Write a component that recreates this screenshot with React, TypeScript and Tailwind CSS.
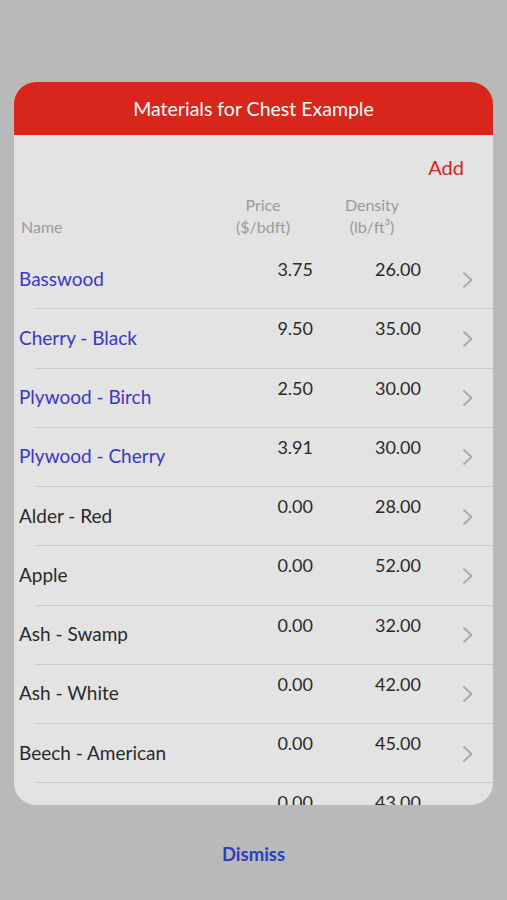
import React from "react";

const rows: { name: string; price: string; density: string; blue?: boolean }[] = [
  { name: "Basswood", price: "3.75", density: "26.00", blue: true },
  { name: "Cherry - Black", price: "9.50", density: "35.00", blue: true },
  { name: "Plywood - Birch", price: "2.50", density: "30.00", blue: true },
  { name: "Plywood - Cherry", price: "3.91", density: "30.00", blue: true },
  { name: "Alder - Red", price: "0.00", density: "28.00" },
  { name: "Apple", price: "0.00", density: "52.00" },
  { name: "Ash -  Swamp", price: "0.00", density: "32.00" },
  { name: "Ash - White", price: "0.00", density: "42.00" },
  { name: "Beech - American", price: "0.00", density: "45.00" },
  { name: "Birch - Yellow", price: "0.00", density: "43.00" },
];

function Chevron() {
  return (
    <svg width="12" height="18" viewBox="0 0 12 18" fill="none">
      <path d="M2 2 L9.5 9 L2 16" stroke="#a8a8a8" strokeWidth="1.8" strokeLinecap="round" strokeLinejoin="round" />
    </svg>
  );
}

export default function App() {
  return (
    <div
      className="w-[507px] h-[900px] bg-[#b9b9b9] flex flex-col items-center pt-[82px]"
      style={{ fontFamily: "Lato, 'Open Sans', sans-serif" }}
    >
      <div className="w-[479px] h-[723px] rounded-[22px] overflow-hidden bg-[#e3e3e3] flex flex-col">
        <div className="h-[53px] bg-[#d9261c] flex items-center justify-center text-white text-[19.5px] shrink-0">
          Materials for Chest Example
        </div>
        <div className="h-[115px] shrink-0 flex flex-col">
          <div className="flex justify-end pr-[29px] pt-[18px] text-[#d9261c] text-[20px] leading-[28px]">Add</div>
          <div className="flex items-end pl-[7px] mt-[13px] text-[#9a9a9a] text-[16px] leading-[22px]">
            <div className="w-[196px]">Name</div>
            <div className="w-[92px] text-center flex flex-col">
              <span>Price</span>
              <span>($/bdft)</span>
            </div>
            <div className="w-[17px]" />
            <div className="w-[92px] text-center flex flex-col">
              <span>Density</span>
              <span>(lb/ft³)</span>
            </div>
          </div>
        </div>
        <div className="flex-1 overflow-hidden flex flex-col">
          {rows.map((r) => (
            <div key={r.name} className="h-[59.25px] shrink-0 flex flex-col">
              <div className="flex-1 flex items-start pl-[5px]">
                <div
                  className={`w-[195px] self-center text-[19px] leading-[24px] mt-[-1px] ${r.blue ? "text-[#3b36c8]" : "text-[#2a2a2a]"}`}
                >
                  {r.name}
                </div>
                <div className="w-[99px] pt-[7px] text-right text-[18px] leading-[24px] text-[#2a2a2a]">{r.price}</div>
                <div className="w-[108px] pt-[7px] text-right text-[18px] leading-[24px] text-[#2a2a2a]">{r.density}</div>
                <div className="ml-[41px] self-center mt-[1px] flex">
                  <Chevron />
                </div>
              </div>
              <div className="ml-[21px] h-px bg-[#c9c9c9]" />
            </div>
          ))}
        </div>
      </div>
      <div className="mt-[36px] text-[#2b3fc2] text-[18.5px] font-bold">Dismiss</div>
    </div>
  );
}
